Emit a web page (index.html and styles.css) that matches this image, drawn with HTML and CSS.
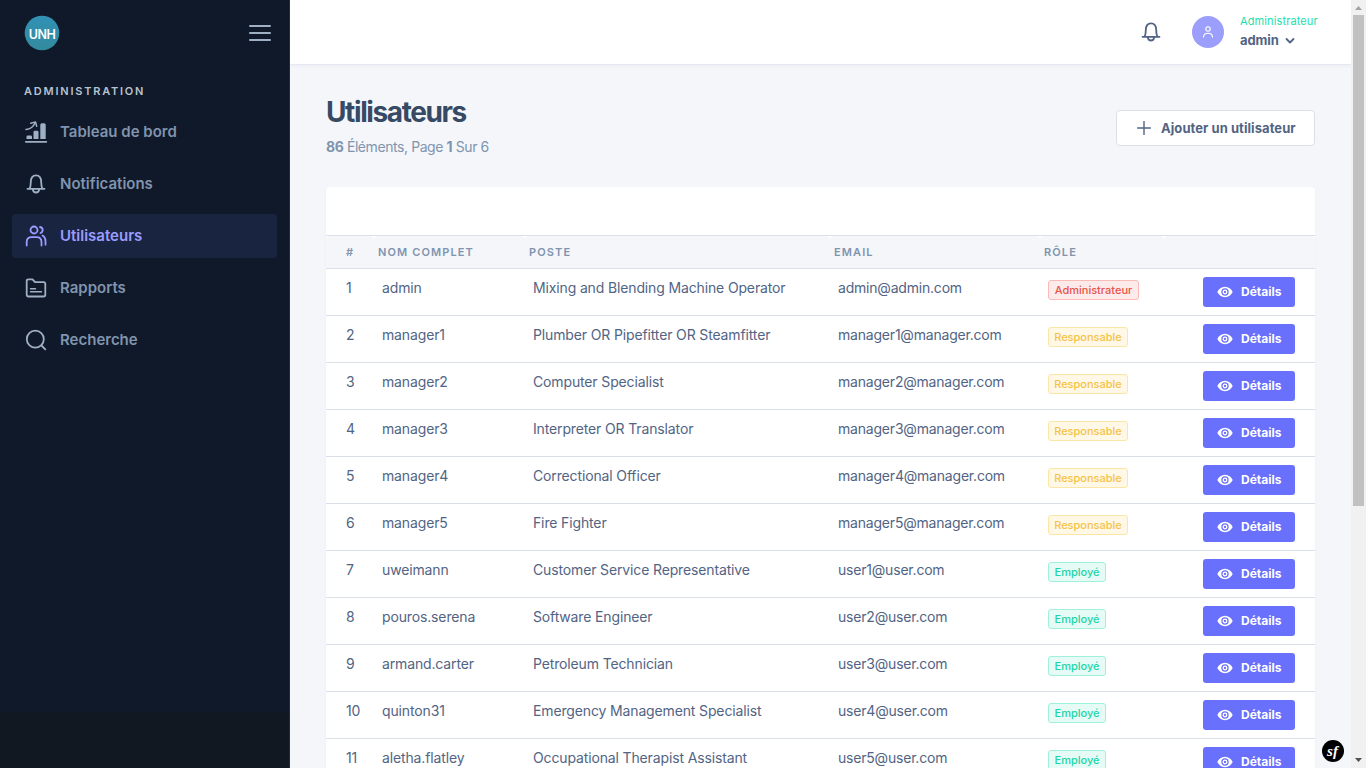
FILE: index.html
```html
<!DOCTYPE html>
<html lang="fr">
<head>
<meta charset="utf-8">
<title>Utilisateurs</title>
<link rel="stylesheet" href="styles.css">
</head>
<body>
<svg class="defs" aria-hidden="true">
  <symbol id="bell" viewBox="0 0 24 24"><path d="M3.500 16.800h17M5.600 16.500c1-1.600 1.200-4 1.200-6.500 0-4 2-6.700 5.200-6.700s5.200 2.700 5.200 6.700c0 2.500.2 4.900 1.200 6.500M8.800 17.300c.3 2.100 1.500 3.200 3.200 3.200s2.900-1.100 3.200-3.200"/></symbol>
  <symbol id="eye" viewBox="0 0 16 12"><path fill="currentColor" fill-rule="evenodd" d="M8 .8C4.500.8 1.800 3 .3 6 1.800 9 4.500 11.200 8 11.200S14.200 9 15.700 6C14.200 3 11.500.8 8 .8Zm0 1.500a3.700 3.700 0 1 1 0 7.400 3.700 3.700 0 0 1 0-7.400Z"/><circle cx="8" cy="6" r="1.800" fill="none" stroke="currentColor" stroke-width="1.300"/></symbol>
</svg>
<div class="app">
  <aside class="sidebar">
    <div class="brand">
      <svg class="logo" viewBox="0 0 36 36"><defs><linearGradient id="lg" x1="0" y1="0" x2="0" y2="1"><stop offset="0" stop-color="#3191b5"/><stop offset="1" stop-color="#338a9d"/></linearGradient></defs><circle cx="18" cy="18" r="17.300" fill="url(#lg)"/><text x="18" y="24" text-anchor="middle">UNH</text></svg>
      <div class="burger"><i></i><i></i><i></i></div>
    </div>
    <h6 class="side-title">ADMINISTRATION</h6>
    <nav class="menu">
      <a class="item"><svg class="ico" viewBox="0 0 24 24"><path d="M1.800 21.800h20.500" stroke-width="1.800"/><path fill="currentColor" stroke="none" d="M2.500 19v-2.300q0-1.300 1.300-1.300h2.900Q8 15.400 8 16.700V19ZM9.500 19v-7q0-1.300 1.300-1.300h2.400q1.300 0 1.300 1.300v7ZM16.300 19V4.700q0-1.500 1.500-1.500h2.400q1.500 0 1.500 1.500V19Z"/><path stroke-width="1.500" d="M2 9.500C6 9.200 9.500 6.500 11.300 2.500M6.800 3.200l4.700-1.300 1.200 4.300"/></svg><span>Tableau de bord</span></a>
      <a class="item"><svg class="ico"><use href="#bell"/></svg><span>Notifications</span></a>
      <a class="item active"><svg class="ico" viewBox="0 0 24 24"><circle cx="10" cy="6" r="3.500"/><path d="M2.700 21.500V18c0-3 2-4.900 5-4.900h4.800c3 0 5 1.900 5 4.900v3.500M16 3c2 .3 2.700 1.500 2.700 3s-.7 2.500-2.200 3M18.500 11.500c2 1 3 3 3 5.500v3.700"/></svg><span>Utilisateurs</span></a>
      <a class="item"><svg class="ico" viewBox="0 0 24 24"><path d="M2.700 5q0-1.700 1.700-1.700h4.100L11 6.200h8.600q1.700 0 1.700 1.700v10.900q0 1.700-1.700 1.700H4.400q-1.700 0-1.700-1.700Z"/><path stroke-width="1.400" d="M6.500 12.800h5M6.500 15.800h11"/></svg><span>Rapports</span></a>
      <a class="item"><svg class="ico" viewBox="0 0 24 24"><circle cx="11.300" cy="11.200" r="8.500"/><path d="m17.500 17.500 3.800 3.800"/></svg><span>Recherche</span></a>
    </nav>
  </aside>
  <main class="main">
    <header class="topbar">
      <svg class="ico bell"><use href="#bell"/></svg>
      <div class="avatar"><svg viewBox="0 0 14 14"><circle cx="7" cy="4" r="2.200"/><path d="M2.500 12c.2-2.300 1.600-3.700 4.500-3.700s4.300 1.400 4.500 3.700"/></svg></div>
      <div class="who"><span class="role">Administrateur</span><span class="name">admin <svg viewBox="0 0 10 8"><path d="m1.500 2 3.500 3.500L8.500 2"/></svg></span></div>
    </header>
    <section class="content">
      <div class="head">
        <div><h3>Utilisateurs</h3><p class="sub"><b>86</b> Éléments, Page <b>1</b> Sur 6</p></div>
        <button class="add"><svg viewBox="0 0 14 14"><path d="M7 .5v13M.5 7h13"/></svg><span>Ajouter un utilisateur</span></button>
      </div>
      <div class="card">
        <div class="card-top"></div>
        <div class="row thead"><div>#</div><div>NOM COMPLET</div><div>POSTE</div><div>EMAIL</div><div>RÔLE</div><div></div></div>
        <div class="row"><div>1</div><div>admin</div><div>Mixing and Blending Machine Operator</div><div>admin@admin.com</div><div><span class="badge red">Administrateur</span></div><div><button class="btn"><svg><use href="#eye"/></svg>Détails</button></div></div>
        <div class="row"><div>2</div><div>manager1</div><div>Plumber OR Pipefitter OR Steamfitter</div><div>manager1@manager.com</div><div><span class="badge yellow">Responsable</span></div><div><button class="btn"><svg><use href="#eye"/></svg>Détails</button></div></div>
        <div class="row"><div>3</div><div>manager2</div><div>Computer Specialist</div><div>manager2@manager.com</div><div><span class="badge yellow">Responsable</span></div><div><button class="btn"><svg><use href="#eye"/></svg>Détails</button></div></div>
        <div class="row"><div>4</div><div>manager3</div><div>Interpreter OR Translator</div><div>manager3@manager.com</div><div><span class="badge yellow">Responsable</span></div><div><button class="btn"><svg><use href="#eye"/></svg>Détails</button></div></div>
        <div class="row"><div>5</div><div>manager4</div><div>Correctional Officer</div><div>manager4@manager.com</div><div><span class="badge yellow">Responsable</span></div><div><button class="btn"><svg><use href="#eye"/></svg>Détails</button></div></div>
        <div class="row"><div>6</div><div>manager5</div><div>Fire Fighter</div><div>manager5@manager.com</div><div><span class="badge yellow">Responsable</span></div><div><button class="btn"><svg><use href="#eye"/></svg>Détails</button></div></div>
        <div class="row"><div>7</div><div>uweimann</div><div>Customer Service Representative</div><div>user1@user.com</div><div><span class="badge green">Employé</span></div><div><button class="btn"><svg><use href="#eye"/></svg>Détails</button></div></div>
        <div class="row"><div>8</div><div>pouros.serena</div><div>Software Engineer</div><div>user2@user.com</div><div><span class="badge green">Employé</span></div><div><button class="btn"><svg><use href="#eye"/></svg>Détails</button></div></div>
        <div class="row"><div>9</div><div>armand.carter</div><div>Petroleum Technician</div><div>user3@user.com</div><div><span class="badge green">Employé</span></div><div><button class="btn"><svg><use href="#eye"/></svg>Détails</button></div></div>
        <div class="row"><div>10</div><div>quinton31</div><div>Emergency Management Specialist</div><div>user4@user.com</div><div><span class="badge green">Employé</span></div><div><button class="btn"><svg><use href="#eye"/></svg>Détails</button></div></div>
        <div class="row"><div>11</div><div>aletha.flatley</div><div>Occupational Therapist Assistant</div><div>user5@user.com</div><div><span class="badge green">Employé</span></div><div><button class="btn"><svg><use href="#eye"/></svg>Détails</button></div></div>
      </div>
    </section>
  </main>
  <div class="scroll"><svg viewBox="0 0 15 15"><path fill="#a3a3a3" d="M4 10h7L7.500 6Z"/></svg><div class="thumb"></div><svg viewBox="0 0 15 15"><path fill="#505050" d="M4 5h7L7.500 9Z"/></svg></div>
</div>
<svg class="sf" viewBox="0 0 22 22"><circle cx="11" cy="11" r="11"/><text x="10.500" y="15.500" text-anchor="middle">sf</text></svg>
</body>
</html>
```
FILE: styles.css
```css
* { box-sizing: border-box; }
html, body { margin: 0; height: 768px; overflow: hidden; }
body { font: 14px/20px Inter, "Open Sans", sans-serif; color: #526484; background: #f5f6fa; }
svg { display: block; flex: none; }
.defs { width: 0; height: 0; position: absolute; }
.app { display: flex; height: 768px; overflow: hidden; }
.ico { width: 24px; height: 24px; }
.ico, .avatar svg, .name svg, .add svg { fill: none; stroke: currentColor; stroke-width: 1.8; stroke-linecap: round; stroke-linejoin: round; }

.sidebar { width: 290px; flex: none; background: linear-gradient(#101929 712px, #111822 712px); border-right: 1px solid #1f2b4b; }
.brand { height: 65px; padding: 0 18px 0 24px; display: flex; align-items: center; justify-content: space-between; }
.logo { width: 36px; height: 36px; }
.logo text { font: 600 12.500px/1 Inter, sans-serif; fill: #fff; letter-spacing: -.5px; }
.burger { width: 22px; display: grid; gap: 5px; }
.burger i { height: 2px; background: #9fb0c5; border-radius: 1px; }
.side-title { margin: 18px 0 0 24px; font-size: 11px; line-height: 16px; font-weight: 600; letter-spacing: 1.780px; color: #b7c2d0; }
.menu { padding: 11px 12px; display: grid; gap: 8px; }
.item { height: 44px; padding-left: 12px; display: flex; align-items: center; gap: 12px; border-radius: 4px; color: #8094ae; font-size: 15px; font-weight: 600; letter-spacing: 0; }
.item .ico { color: #9fb0c5; }
.item.active, .item.active .ico { color: #9a9cff; }
.active { background: #192440; }

.main { flex: 1; min-width: 0; }
.topbar { height: 65px; background: #fff; border-bottom: 1px solid #e5e9f2; box-shadow: 0 1px 3px rgba(54,74,99,.05); display: flex; align-items: center; padding-right: 33px; justify-content: flex-end; }
.bell { margin-right: 29px; }
.avatar { width: 32px; height: 32px; border-radius: 50%; background: #9c9efb; color: #fff; display: grid; place-items: center; margin-right: 16px; }
.avatar svg { width: 14px; height: 14px; stroke-width: 1.100; }
.who { display: flex; flex-direction: column; width: 78px; padding-bottom: 1px; white-space: nowrap; }
.role { font-size: 11px; line-height: 16px; color: #1ee0ac; letter-spacing: .12px; }
.name { font-size: 13px; line-height: 22px; font-weight: 700; display: flex; align-items: center; gap: 6px; letter-spacing: -.1px; }
.name svg { width: 10px; height: 8px; margin-top: 3px; }

.content { padding: 29px 36px 0; }
.head { display: flex; justify-content: space-between; height: 93px; }
h3 { margin: 0; font-size: 28px; line-height: 36px; font-weight: 700; letter-spacing: -1.400px; color: #364a63; }
.sub { margin: 7px 0 0; color: #8094ae; letter-spacing: -.42px; }
.add { margin-top: 16px; height: 36px; width: 199px; border: 1px solid #dbdfea; border-radius: 4px; background: #fff; color: #526484; font: 700 13px/20px Inter, sans-serif; letter-spacing: .06px; display: flex; align-items: center; padding: 0 0 1px 20px; gap: 10px; white-space: nowrap; }
.add svg { width: 14px; height: 14px; stroke-width: 1.400; margin-top: 1px; }
.card { background: #fff; border-radius: 4px 4px 0 0; width: 989px; box-shadow: 0 1px 3px rgba(54,74,99,.05); }
.card-top { height: 49px; border-bottom: 1px solid #dbdfea; }
.row { display: grid; grid-template-columns: 48px 151px 305px 210px 124px 1fr; height: 47px; border-bottom: 1px solid #dbdfea; letter-spacing: -.14px; }
.row > div { padding: 9px 0 0 8px; white-space: nowrap; }
.row > div:nth-child(4) { letter-spacing: -.2px; }
.row > div:first-child { padding-left: 20px; }
.row > div:last-child { padding: 8px 20px 0 0; display: flex; justify-content: flex-end; }
.thead { height: 33px; font-size: 11px; font-weight: 600; color: #8094ae; }
.thead > div { background: #f5f6fa; border-radius: 4px 4px 0 0; }
.row.thead > div { padding-top: 6px; padding-left: 4px; letter-spacing: 1.120px; }
.row.thead > div:first-child { padding-left: 20px; }
.badge { display: flex; width: max-content; height: 20px; align-items: center; justify-content: center; font-size: 11px; line-height: 18px; font-weight: 500; letter-spacing: 0; border: 1px solid; border-radius: 3px; margin-top: 2px; }
.red { width: 91px; color: #e85347; background: #fdebeb; border-color: #f8bbb7; }
.yellow { width: 80px; color: #f4c347; background: #fff8e6; border-color: #fbe6a5; }
.green { width: 58px; color: #1ed5a8; background: #e6fbf5; border-color: #a0f1dc; }
.btn { width: 92px; height: 30px; border: 0; border-radius: 3px; background: #6970fb; color: #fff; font: 700 12px/20px Inter, sans-serif; letter-spacing: 0; display: flex; align-items: center; padding: 0 0 0 14px; gap: 8px; }
.btn svg { width: 16px; height: 12px; }
.scroll { width: 15px; background: #f1f1f1; height: 768px; display: flex; flex-direction: column; flex: none; }
.scroll svg { width: 15px; height: 15px; }
.thumb { height: 491px; margin: 0 2px 247px; background: #c1c1c1; flex: none; }
.sf { position: absolute; left: 1322px; top: 740px; width: 22px; height: 22px; }
.sf text { font: italic 700 15px "Liberation Serif", serif; fill: #fff; }
```
